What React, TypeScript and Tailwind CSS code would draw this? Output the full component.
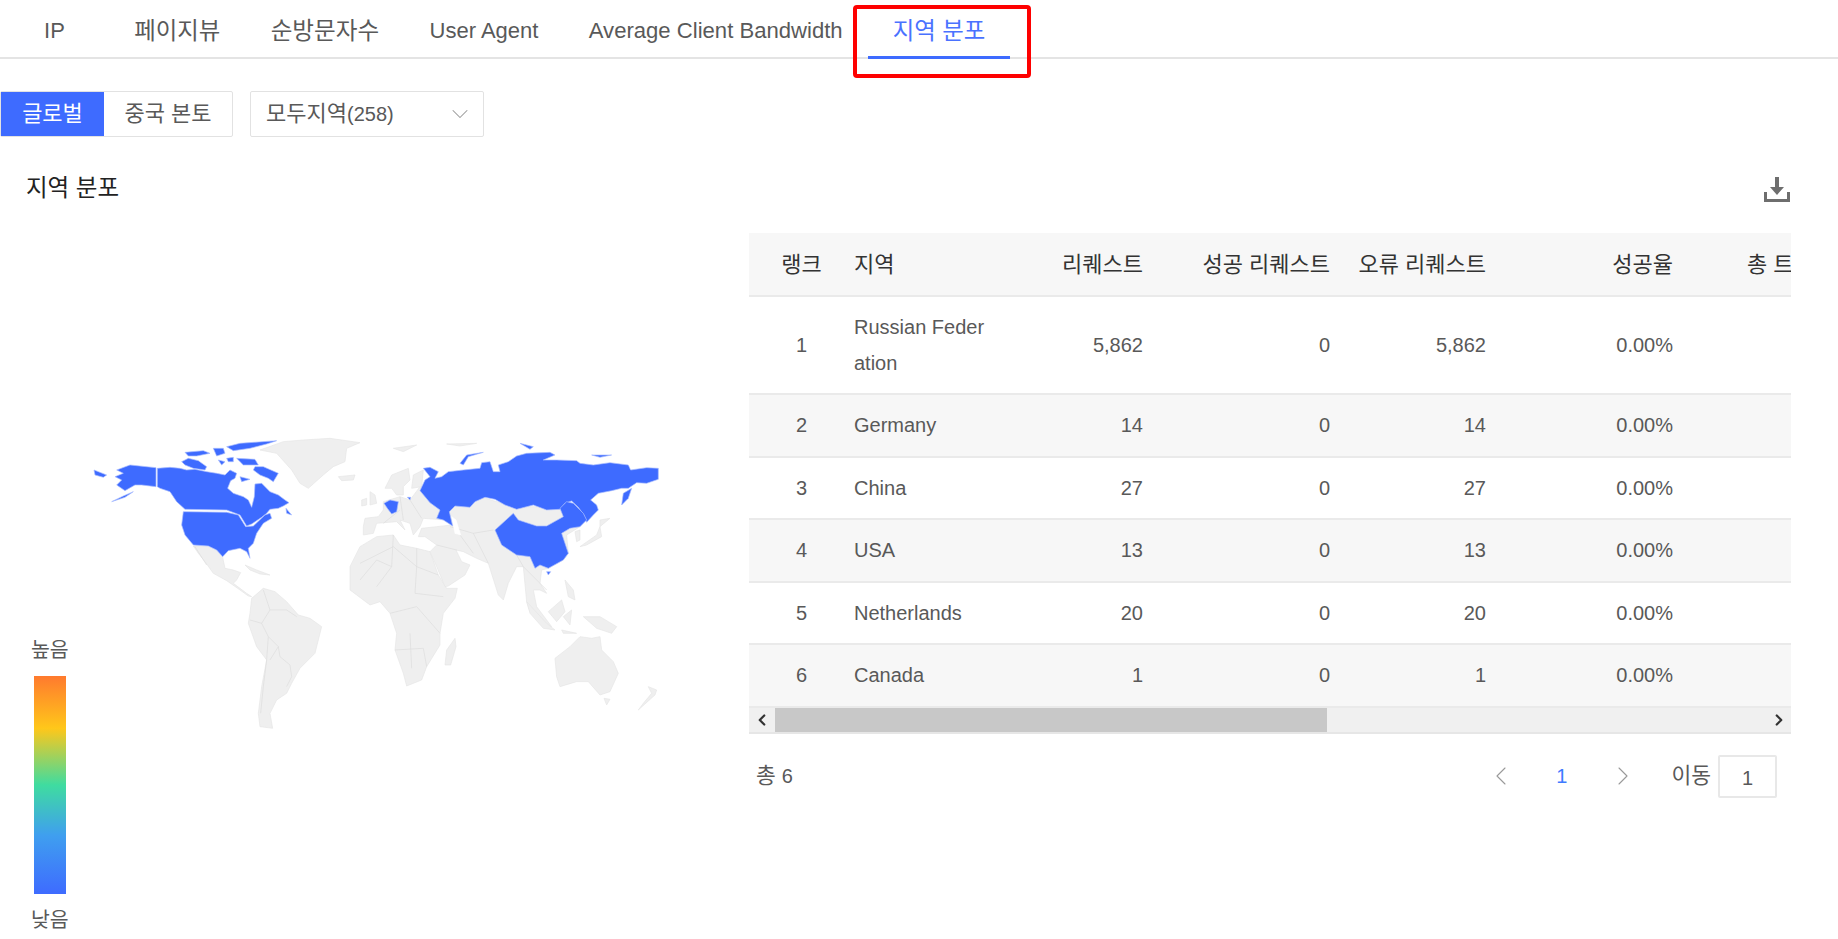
import { ChevronDown, ChevronLeft, ChevronRight } from "lucide-react";

const FONT = "font-['Liberation_Sans','Noto_Sans_CJK_KR',sans-serif]";

const tabs = [
  { label: "페이지뷰", size: "text-[23.4px]" },
  { label: "순방문자수", size: "text-[23.6px]" },
  { label: "User Agent", size: "text-[22px]" },
  { label: "Average Client Bandwidth", size: "text-[22.1px]" },
];

const rows = [
  { rank: 1, region: "Russian Federation", total: "5,862", ok: "0", err: "5,862", rate: "0.00%" },
  { rank: 2, region: "Germany", total: "14", ok: "0", err: "14", rate: "0.00%" },
  { rank: 3, region: "China", total: "27", ok: "0", err: "27", rate: "0.00%" },
  { rank: 4, region: "USA", total: "13", ok: "0", err: "13", rate: "0.00%" },
  { rank: 5, region: "Netherlands", total: "20", ok: "0", err: "20", rate: "0.00%" },
  { rank: 6, region: "Canada", total: "1", ok: "0", err: "1", rate: "0.00%" },
];

// map shapes, in coordinates of 3x crops
const westGray = [
  "M370 378L415 380L440 392L458 412L465 445L490 450L512 458L500 480L490 490L530 520L545 530L535 528L510 510L470 482L430 460L405 425L385 400Z",
  "M570 90L640 65L700 60L780 55L870 68L830 85L825 125L790 140L760 165L715 205L690 190L665 150L620 100Z",
  "M525 435L560 450L600 465L570 462L540 450Z",
  "M545 535L580 505L615 515L650 545L685 585L720 595L755 620L745 660L735 700L690 745L665 790L650 820L620 840L600 880L608 925L570 920L565 880L575 800L590 720L560 680L535 610L540 580Z",
];
const westLines = [
  "M375 380L410 435",
  "M580 510L600 570L575 610L595 650L625 680L630 710L660 735L665 770L650 800",
  "M600 570L650 570L680 590",
  "M595 650L590 720L580 800L572 880",
  "M625 680L600 720",
  "M540 600L575 610",
];
const westBlue = [
  "M258 143L180 135L140 150L160 160L135 170L155 180L140 195L165 212L195 195L215 195L258 200Z",
  "M72 150L85 155L110 165L100 172L75 165Z",
  "M125 245L160 228L190 215L165 232Z",
  "M262 145L300 142L330 145L350 150L375 148L410 155L440 160L465 165L480 150L500 160L495 175L482 182L473 205L490 220L520 230L535 240L545 262L553 230L555 192L575 190L600 215L625 225L645 240L657 248L640 258L625 265L600 268L590 280L575 292L545 312L530 318L510 285L470 270L345 268L320 245L300 215L270 205L262 200Z",
  "M335 125L355 115L385 122L410 140L405 150L370 145L345 135Z",
  "M345 97L400 92L420 100L380 108L355 108Z",
  "M430 85L460 85L465 100L440 108Z",
  "M470 80L510 70L620 62L590 72L540 85L490 92Z",
  "M470 115L490 112L490 125L475 125Z",
  "M500 115L555 118L565 135L520 135Z",
  "M445 120L465 125L455 135Z",
  "M555 140L580 140L625 160L610 185L595 175L570 165L550 150Z",
  "M510 170L540 178L515 185Z",
  "M648 265L665 285L650 280Z",
  "M340 275L470 277L505 285L527 320L550 318L585 285L600 280L605 295L580 310L560 340L550 370L535 385L540 415L530 395L510 385L475 392L458 410L440 390L415 378L370 375L345 345L335 315Z",
];
const eastGray = [
  "M-90 440L-60 380L-10 350L40 345L60 375L110 385L150 395L175 465L200 505L232 505L225 535L190 580L180 640L180 675L140 740L125 780L80 798L70 760L45 690L50 640L30 580L0 545L-30 555L-90 510Z",
  "M-50 320L-45 295L-5 290L10 270L10 245L60 230L90 240L120 200L170 220L300 230L400 260L540 260L600 320L560 345L565 400L550 420L505 445L485 450L480 490L500 520L480 510L460 510L470 560L515 620L490 620L450 575L440 545L430 440L410 440L385 490L370 540L355 525L325 430L290 415L250 395L228 390L245 425L270 435L255 465L205 498L195 500L170 440L150 395L170 375L135 350L115 350L125 325L170 320L215 315L195 300L130 295L120 320L100 345L90 310L60 300L75 330L50 305L-10 310L-20 340L-50 345Z",
  "M15 205L35 165L85 145L90 180L70 200L70 225L50 225L35 205Z",
  "M100 165L130 150L125 200L95 205Z",
  "M-125 170L-75 165L-80 180L-115 182Z",
  "M-30 215L-15 225L-10 250L-30 255Z",
  "M-55 240L-40 235L-40 255L-55 258Z",
  "M40 85L110 75L70 95Z",
  "M200 72L290 70L240 78Z",
  "M585 335L600 330L600 360L590 365Z",
  "M600 380L650 345L660 320L665 350L620 375Z",
  "M660 300L690 295L660 320Z",
  "M555 480L580 510L585 540L565 530Z",
  "M440 545L500 610L525 630L490 625L450 580Z",
  "M505 575L545 540L555 575L530 605Z",
  "M550 590L575 570L570 615Z",
  "M610 590L660 590L710 620L695 640L650 625Z",
  "M545 630L590 640L550 640Z",
  "M525 715L570 680L600 650L635 655L660 650L665 690L700 725L715 760L690 815L660 825L625 785L590 785L540 800L530 770Z",
  "M672 835L690 838L680 855Z",
  "M775 870L825 825L830 810L805 800L815 820L790 850Z",
  "M195 735L200 690L225 655L228 680L212 735Z",
];
const eastLines = [
  "M-60 430L40 380L110 440L105 520L190 530",
  "M40 345L35 440L-10 500",
  "M110 385L110 440L175 465",
  "M30 580L110 560L180 640",
  "M45 690L130 685L140 740",
  "M90 640L95 745",
  "M170 375L230 390",
  "M210 320L280 340L325 430",
  "M280 340L340 330",
  "M410 405L430 440L500 510",
  "M60 230L70 300",
  "M90 240L125 295",
  "M10 310L60 270",
  "M35 440L-10 420L-60 480",
  "M240 345L280 400",
];
const eastWhite = ["M215 290L228 300L242 345L225 340Z"];
const eastBlue = [
  "M130 145L150 142L175 155L165 175L185 170L205 155L250 150L300 145L305 128L330 125L340 155L360 155L355 135L385 125L410 108L440 100L510 97L525 105L490 120L530 120L590 122L600 130L640 135L690 128L745 135L752 150L800 143L835 145L835 178L800 190L770 188L745 205L725 205L695 212L655 220L632 240L650 255L655 270L640 285L620 307L612 285L595 262L575 243L555 250L540 268L500 270L460 255L410 268L375 255L345 238L315 232L285 245L270 262L225 258L208 275L218 318L190 300L170 295L180 270L150 248L120 212L135 180L150 170Z",
  "M240 130L260 105L310 97L265 110L250 135Z",
  "M725 255L730 220L755 205L745 235Z",
  "M420 70L460 80L450 88Z",
  "M635 105L695 105L660 112Z",
  "M345 330L400 280L415 300L470 318L500 318L550 290L540 265L560 245L580 250L610 280L620 300L600 320L570 325L545 340L565 400L550 420L505 445L480 435L465 445L450 410L410 405L365 375Z",
  "M500 455L512 455L505 465Z",
  "M12 250L30 240L55 245L50 275L35 282L22 265Z",
  "M82 232L92 232L90 240Z",
];

function WorldMap() {
  const shape = (d: string, fill: string, stroke: string) => (
    <path key={d} d={d} fill={fill} stroke={stroke} strokeWidth={2} strokeLinejoin="round" />
  );
  return (
    <svg viewBox="0 0 749 350" className="block w-[749px] h-[350px] blur-[0.4px]">
      <g transform="translate(70 0) scale(0.3333)">
        {westGray.map((d) => shape(d, "#efefef", "#e6e6e6"))}
        {westLines.map((d) => shape(d, "none", "#dcdcdc"))}
        {westBlue.map((d) => shape(d, "#3e6bff", "#a9bcff"))}
      </g>
      <g transform="translate(380 0) scale(0.3333)">
        {eastGray.map((d) => shape(d, "#efefef", "#e6e6e6"))}
        {eastLines.map((d) => shape(d, "none", "#dcdcdc"))}
        {eastWhite.map((d) => shape(d, "#ffffff", "#ffffff"))}
        {eastBlue.map((d) => shape(d, "#3e6bff", "#a9bcff"))}
      </g>
    </svg>
  );
}

export default function App() {
  return (
    <div className={`w-[1838px] h-[939px] overflow-hidden bg-white text-[20px] text-[#595959] ${FONT}`}>
      <div className="flex h-[59px] border-b-2 border-[#e4e4e4] leading-[62px]">
        <div className="w-[109px] text-center text-[22px]">IP</div>
        {tabs.map((t) => (
          <div key={t.label} className={`px-[25.2px] whitespace-nowrap ${t.size}`}>
            {t.label}
          </div>
        ))}
        <div className="relative h-[59px] px-[25px] text-[23.4px] text-[#4a72ff] border-b-[3px] border-[#3e6bff] whitespace-nowrap">
          지역 분포
          <div className="absolute left-[-15px] top-[5px] w-[178px] h-[73px] border-[4px] border-[#fe0000] rounded-[4px]" />
        </div>
      </div>

      <div className="flex mt-[32px] h-[46px] leading-[44px] text-[22px]">
        <div className="flex w-[233px] border border-[#e2e2e2] rounded-[2px]">
          <div className="w-[103px] text-center text-white bg-[#3e6bff]">글로벌</div>
          <div className="flex-1 text-center">중국 본토</div>
        </div>
        <div className="flex items-center justify-between w-[234px] ml-[17px] pl-[15px] pr-[9px] border border-[#e2e2e2] rounded-[2px]">
          <span>
            모두지역<span className="text-[20px]">(258)</span>
          </span>
          <ChevronDown size={28} strokeWidth={0.9} className="text-[#999]" />
        </div>
      </div>

      <div className="flex items-center justify-between h-[40px] mt-[32px] pl-[26px] pr-[48px] text-[23.5px] text-[#222]">
        지역 분포
        <svg viewBox="0 0 26 25" className="w-[26px] h-[25px]" fill="#6e6e6e">
          <path d="M11 0h4v10h5l-7 8-7-8h5z" />
          <path d="M0 15h3v7h20v-7h3v10H0z" />
        </svg>
      </div>

      <div className="flex mt-[24px]">
        <div className="relative w-[749px] shrink-0 pt-[187px]">
          <WorldMap />
          <div className="absolute left-[31px] top-[405px] flex flex-col items-center text-[20.5px] leading-[24px]">
            높음
            <div className="w-[32px] h-[218px] my-[14px] bg-[linear-gradient(to_bottom,#ff7a2e,#ffc71a_24%,#3fdca0_50%,#3f9fef_73%,#3e6bff)]" />
            낮음
          </div>
        </div>

        <div className="w-[1042px]">
          <div className="overflow-hidden">
            <table className="table-fixed border-collapse w-[1124px]">
              <colgroup>
                <col className="w-[105px]" />
                <col className="w-[140px]" />
                <col className="w-[149px]" />
                <col className="w-[187px]" />
                <col className="w-[156px]" />
                <col className="w-[187px]" />
                <col className="w-[200px]" />
              </colgroup>
              <thead>
                <tr className="h-[63px] bg-[#f7f7f7] border-b-2 border-[#eaeaea] text-[22px] text-[#333]">
                  <th className="font-normal text-center">랭크</th>
                  <th className="font-normal text-left">지역</th>
                  <th className="font-normal text-right">리퀘스트</th>
                  <th className="font-normal text-right whitespace-nowrap">성공 리퀘스트</th>
                  <th className="font-normal text-right whitespace-nowrap">오류 리퀘스트</th>
                  <th className="font-normal text-right">성공율</th>
                  <th className="font-normal text-left pl-[74px] whitespace-nowrap">총 트래픽</th>
                </tr>
              </thead>
              <tbody>
                {rows.map((r) => (
                  <tr
                    key={r.rank}
                    className={`border-b-2 border-[#eaeaea] ${r.rank === 1 ? "h-[98px]" : "h-[62.5px]"} ${
                      r.rank % 2 === 0 ? "bg-[#f7f7f7]" : "bg-white"
                    }`}
                  >
                    <td className="text-center">{r.rank}</td>
                    <td className="break-all leading-[36px]">{r.region}</td>
                    <td className="text-right">{r.total}</td>
                    <td className="text-right">{r.ok}</td>
                    <td className="text-right">{r.err}</td>
                    <td className="text-right">{r.rate}</td>
                    <td />
                  </tr>
                ))}
              </tbody>
            </table>
          </div>

          <div className="flex items-center h-[26px] bg-[#f0f0f0] border-b-2 border-[#e6e6e6] text-[#333]">
            <div className="flex justify-center w-[26px]">
              <ChevronLeft size={18} strokeWidth={3} />
            </div>
            <div className="w-[552px] h-full bg-[#c8c8c8]" />
            <div className="flex justify-end flex-1 pr-[3px]">
              <ChevronRight size={18} strokeWidth={3} />
            </div>
          </div>

          <div className="flex items-center mt-[21px] h-[43px] pl-[7px] pr-[14px]">
            <span className="text-[21.5px]">
              총 <span className="text-[20px]">6</span>
            </span>
            <ChevronLeft size={32} strokeWidth={0.8} className="ml-auto text-[#999]" />
            <span className="ml-[39px] text-[#3e7bff]">1</span>
            <ChevronRight size={32} strokeWidth={0.8} className="ml-[40px] text-[#999]" />
            <span className="ml-[32px] text-[21.5px]">이동</span>
            <div className="w-[59px] h-[43px] ml-[7px] text-center leading-[43px] border-2 border-[#e8e8e8] rounded-[2px]">
              1
            </div>
          </div>
        </div>
      </div>
    </div>
  );
}
